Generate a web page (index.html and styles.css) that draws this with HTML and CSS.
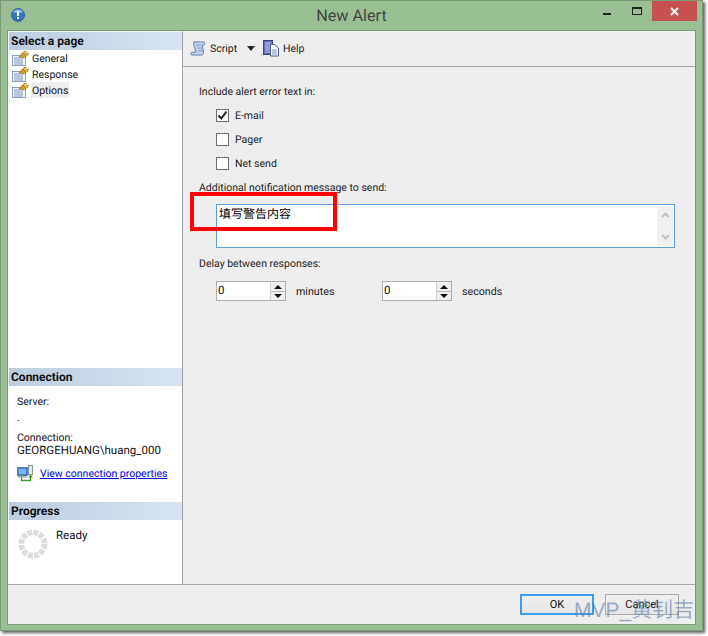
FILE: index.html
```html
<!DOCTYPE html>
<html lang="en">
<head>
<meta charset="utf-8">
<title>New Alert</title>
<link rel="stylesheet" href="styles.css">
</head>
<body>
<svg class="defs" width="0" height="0" aria-hidden="true">
  <symbol id="page-icon" viewBox="0 0 17 16">
    <rect x="0.500" y="5.500" width="13" height="10" fill="#f4f7fb" stroke="#8d9fb8"/>
    <path d="M2 8h8M2 10h9M2 12h9M2 14h9" stroke="#7f97c0"/>
    <path d="M7 6.500l5-5 2 0 2.500 2-1 2-4 2.500z" fill="#f0c040" stroke="#80661e" stroke-width="0.700"/>
    <path d="M8.500 6.500l4-3.500M10.500 7l4-3.500" stroke="#6b5a2a" stroke-width="0.800"/>
    <path d="M13 2l2.500 1" stroke="#fff2b0"/>
  </symbol>
</svg>
<div class="window">
  <header class="titlebar">
    <svg class="app-icon" width="14" height="14" viewBox="0 0 14 14">
      <circle cx="7" cy="7" r="6.500" fill="#3a74c4" stroke="#2a5596" stroke-width="0.800"/>
      <path d="M7 1.500a5.500 4 0 0 1 5 3H2a5.500 4 0 0 1 5-3z" fill="#8fb8ea"/>
      <rect x="6" y="3" width="2" height="5" fill="#fff"/>
      <rect x="6" y="9" width="2" height="2" fill="#fff"/>
    </svg>
    <h1 class="title">New Alert</h1>
    <div class="controls">
      <span class="ctl ctl-min"><i class="min-glyph"></i></span>
      <span class="ctl ctl-max"><i class="max-glyph"></i></span>
      <span class="ctl-close">
        <svg width="9" height="9" viewBox="0 0 9 9"><path d="M1 1l7 7M8 1L1 8" stroke="#fff" stroke-width="2"/></svg>
      </span>
    </div>
  </header>

  <div class="client">
    <div class="body">
      <aside class="sidebar">
        <section>
          <h2 class="panel-head">Select a page</h2>
          <ul class="pages">
            <li class="page"><svg class="page-svg" width="17" height="16"><use href="#page-icon"/></svg><span class="page-label">General</span></li>
            <li class="page"><svg class="page-svg" width="17" height="16"><use href="#page-icon"/></svg><span class="page-label">Response</span></li>
            <li class="page"><svg class="page-svg" width="17" height="16"><use href="#page-icon"/></svg><span class="page-label page-label-on">Options</span></li>
          </ul>
        </section>
        <section class="conn">
          <h2 class="panel-head">Connection</h2>
          <div class="conn-body">
            <div class="conn-line">Server:</div>
            <div class="conn-line conn-dot">.</div>
            <div class="conn-line conn-name">Connection:</div>
            <div class="conn-line text-lg">GEORGEHUANG\huang_000</div>
            <div class="conn-link-row">
              <svg width="17" height="17" viewBox="0 0 17 17">
                <rect x="0.500" y="2.500" width="10" height="8" fill="#3f7fd6" stroke="#6d7f99"/>
                <rect x="2" y="4" width="7" height="5" fill="#7db4f0"/>
                <rect x="11.500" y="0.500" width="4" height="9" fill="#e8e8ea" stroke="#8b93a0"/>
                <path d="M1 11h9v1.500H1z" fill="#9aa5b5"/>
                <path d="M4.500 12v3.500h9V12" fill="none" stroke="#3d9a2e" stroke-width="1.300"/>
                <path d="M11 12.500l2.500-3 2.500 3z" fill="#3d9a2e"/>
              </svg>
              <a class="conn-link" href="#">View connection properties</a>
            </div>
          </div>
        </section>
        <section class="progress">
          <h2 class="panel-head">Progress</h2>
          <div class="progress-body">
            <svg width="30" height="30" viewBox="0 0 32 32">
              <circle cx="16" cy="16" r="12.500" fill="none" stroke="#dcdcdc" stroke-width="6" stroke-dasharray="5.200 1.350"/>
            </svg>
            <span class="ready text-lg">Ready</span>
          </div>
        </section>
      </aside>

      <main class="content">
        <div class="toolbar">
          <svg width="16" height="17" viewBox="0 0 17 17">
            <path d="M4 1.500h10.500c1.500 0 1.500 3.500 0 3.500H13c0 3 1.500 5 1.500 7.500 0 2-1 3-3 3H2c-1.500 0-1.500-3 0.500-3H6C6 9 4 7 4 4c0-1 0-2 0-2.500z" fill="#c5d3e8" stroke="#5d7da6"/>
            <path d="M6.500 5h5M8 8h5M8.500 11h5" stroke="#7d96ba"/>
          </svg>
          <span class="tool-label tool-script">Script</span>
          <i class="caret"></i>
          <svg class="help-icon" width="16" height="17" viewBox="0 0 16 17">
            <rect x="0.500" y="0.500" width="9" height="14" fill="#5c6fb8" stroke="#34437f"/>
            <rect x="2" y="2" width="6" height="11" fill="#8d9cd8"/>
            <path d="M7.500 4.500h4l4 3.500v8h-8z" fill="#fff" stroke="#4b5a8f"/>
            <path d="M9 10h5M9 12h5M9 14h5" stroke="#7d8fc0"/>
          </svg>
          <span class="tool-label">Help</span>
        </div>

        <form class="form">
          <div class="row-label">Include alert error text in:</div>
          <div class="checks">
            <label class="check"><span class="box"><svg width="11" height="11" viewBox="0 0 11 11"><path d="M1.500 5.500l2.800 3L9.500 1.500" fill="none" stroke="#222" stroke-width="2"/></svg></span>E-mail</label>
            <label class="check"><span class="box"></span>Pager</label>
            <label class="check"><span class="box"></span>Net send</label>
          </div>
          <div class="row-label">Additional notification message to send:</div>
          <div class="memo">
            <span class="memo-text">填写警告内容</span>
            <div class="memo-scroll">
              <svg width="9" height="6" viewBox="0 0 9 6"><path d="M1 5l3.500-3.500L8 5" fill="none" stroke="#c4c4c4" stroke-width="2"/></svg>
              <svg width="9" height="6" viewBox="0 0 9 6"><path d="M1 1l3.500 3.500L8 1" fill="none" stroke="#c4c4c4" stroke-width="2"/></svg>
            </div>
          </div>
          <div class="row-label row-delay">Delay between responses:</div>
          <div class="spins">
            <div class="spin"><span class="spin-val">0</span><span class="spin-btns"><i class="up"></i><i class="down"></i></span></div>
            <span class="unit unit-min">minutes</span>
            <div class="spin"><span class="spin-val">0</span><span class="spin-btns"><i class="up"></i><i class="down"></i></span></div>
            <span class="unit">seconds</span>
          </div>
        </form>
      </main>
    </div>
    <footer class="footer">
      <button class="btn btn-ok" type="button">OK</button>
      <button class="btn" type="button">Cancel</button>
    </footer>
  </div>
  <div class="highlight"></div>
</div>
<div class="watermark">MVP_黄钊吉</div>
</body>
</html>
```
FILE: styles.css
```css
* { box-sizing: border-box; }
html, body { margin: 0; padding: 0; background: #fff; }
body {
  width: 708px;
  height: 636px;
  position: relative;
  overflow: hidden;
  font: 10.5px/16px Roboto, "Noto Sans CJK SC", sans-serif;
  text-rendering: geometricPrecision;
  color: #111;
}
.defs { position: absolute; }
.text-lg { font-size: 11.5px; }
.window {
  width: 703px;
  height: 631px;
  background: #9bbf94;
  border: 1px solid #7b9a78;
  box-shadow: 2px 2px 3px rgba(0, 0, 0, .65);
  display: flex;
  flex-direction: column;
  position: relative;
}
.titlebar {
  height: 29px;
  flex: none;
  display: flex;
  align-items: flex-start;
  position: relative;
}
.app-icon { margin: 7px 0 0 10px; }
.title {
  position: absolute;
  left: 0;
  right: 0;
  top: 5px;
  margin: 0;
  text-align: center;
  font-size: 16.2px;
  line-height: 20px;
  font-weight: 400;
  color: #444;
}
.controls { margin-left: auto; margin-right: 5px; display: flex; height: 20px; position: relative; }
.ctl { width: 30px; display: flex; justify-content: center; }
.min-glyph { width: 8px; height: 2px; background: #222; margin-top: 12px; }
.max-glyph { width: 10px; height: 8px; border: 1px solid #222; border-top-width: 2px; margin-top: 6px; }
.ctl-close {
  width: 45px;
  background: #c75050;
  display: flex;
  align-items: center;
  justify-content: center;
}
.client {
  flex: 1;
  margin: 0 6px 5px 6px;
  border: 1px solid #7b9a78;
  background: #eee;
  display: flex;
  flex-direction: column;
  min-height: 0;
}
.body { flex: 1; display: flex; min-height: 0; border-bottom: 1px solid #a8a8a8; }
.sidebar {
  width: 175px;
  flex: none;
  background: #fff;
  border-right: 1px solid #a0a0a0;
  border-top: 1px solid #eee;
  padding-left: 1px;
  display: flex;
  flex-direction: column;
}
.panel-head {
  margin: 0;
  height: 18px;
  padding-left: 2px;
  font-size: 12px;
  line-height: 18px;
  font-weight: 700;
  color: #111;
  background: linear-gradient(90deg, #bccddf, #d6e4f1);
}
.pages { list-style: none; margin: 0; padding: 0; }
.page { height: 16px; display: flex; align-items: center; padding-left: 3px; }
.page-svg { flex: none; }
.page-label { margin-left: 2px; padding: 1px 1px 0; line-height: 15px; }
.page-label-on { background: #eee; }
.conn { margin-top: auto; }
.conn-body { height: 116px; padding: 9px 0 0 8px; }
.conn-line { line-height: 13px; height: 13px; margin-top: 0; }
.conn-dot { margin-top: 3px; }
.conn-name { margin-top: 7px; }
.conn-link-row { display: flex; align-items: center; margin-top: 8px; }
.conn-link { margin-left: 6px; color: #0000ee; text-decoration: underline; }
.progress { height: 82px; }
.progress-body { display: flex; padding: 7px 0 0 9px; }
.ready { margin: 0 0 0 8px; }
.progress-body svg { margin-top: 2px; }
.content { flex: 1; min-width: 0; display: flex; flex-direction: column; }
.toolbar {
  height: 36px;
  flex: none;
  border-top: 1px solid #eee;
  border-bottom: 1px solid #a8a8a8;
  display: flex;
  align-items: center;
  padding: 0 0 1px 7px;
}
.tool-label { margin-left: 4px; color: #222; }
.tool-script { width: 27px; }
.caret {
  width: 0;
  height: 0;
  border: 4px solid transparent;
  border-top: 5px solid #222;
  border-bottom: 0;
  margin-left: 10px;
}
.help-icon { margin-left: 8px; }
.form { padding: 17px 0 0 16px; }
.row-label { line-height: 16px; height: 16px; color: #222; }
.checks { display: flex; flex-direction: column; gap: 8px; padding: 7px 0 9px 17px; }
.check { display: flex; align-items: center; height: 16px; padding-top: 1px; color: #222; }
.box {
  width: 13px;
  height: 13px;
  margin-top: -1px;
  border: 1px solid #707070;
  background: #fff;
  margin-right: 6px;
  display: flex;
  align-items: center;
  justify-content: center;
}
.memo {
  margin: 8px 0 0 17px;
  width: 459px;
  height: 44px;
  background: #fff;
  border: 1px solid #5b9fe0;
  display: flex;
  justify-content: space-between;
  padding: 1px;
}
.memo-text { margin: 0; font-size: 12px; padding-left: 1px; font-family: "Noto Sans CJK SC", sans-serif; color: #000; line-height: 16px; }
.memo-scroll {
  width: 16px;
  background: #f0f0f0;
  display: flex;
  flex-direction: column;
  align-items: center;
  justify-content: space-between;
  padding: 6px 0;
}
.row-delay { margin-top: 8px; }
.spins { display: flex; align-items: center; margin: 9px 0 0 17px; }
.spin {
  width: 70px;
  height: 20px;
  border: 1px solid #adadad;
  background: #fff;
  display: flex;
  justify-content: space-between;
}
.spin-val { padding-left: 1px; font-size: 11.5px; line-height: 16px; }
.spin-btns {
  width: 15px;
  border-left: 1px solid #d0d0d0;
  display: flex;
  flex-direction: column;
}
.up, .down { flex: 1; background: #efefef; position: relative; }
.up { border-bottom: 1px solid #bbb; }
.up::after, .down::after {
  content: "";
  position: absolute;
  left: 3px;
  top: 3px;
  border: 4px solid transparent;
  border-top: 0;
  border-bottom: 4px solid #111;
}
.down::after { border-bottom: 0; border-top: 4px solid #111; top: 2px; }
.unit { margin-left: 10px; padding-top: 1px; font-size: 10.7px; color: #222; }
.unit-min { width: 86px; }
.footer {
  height: 39px;
  flex: none;
  display: flex;
  gap: 11px;
  justify-content: flex-end;
  padding: 9px 16px 0 0;
}
.btn {
  width: 74px;
  height: 21px;
  padding: 0;
  border: 1px solid #acacac;
  background: linear-gradient(#f0f0f0, #e5e5e5);
  font: inherit;
  font-size: 11px;
  line-height: 18px;
  color: #111;
}
.btn-ok { border: 2px solid #3c9bee; }
.highlight {
  position: absolute;
  left: 189px;
  top: 191px;
  width: 147px;
  height: 39px;
  border: 4px solid #f00;
}
.watermark {
  position: absolute;
  left: 574px;
  top: 595px;
  width: 125px;
  font-size: 21px;
  line-height: 32px;
  white-space: nowrap;
  color: rgba(95, 125, 170, .6);
  font-family: "Liberation Sans", "Noto Sans CJK SC", sans-serif;
}
```
